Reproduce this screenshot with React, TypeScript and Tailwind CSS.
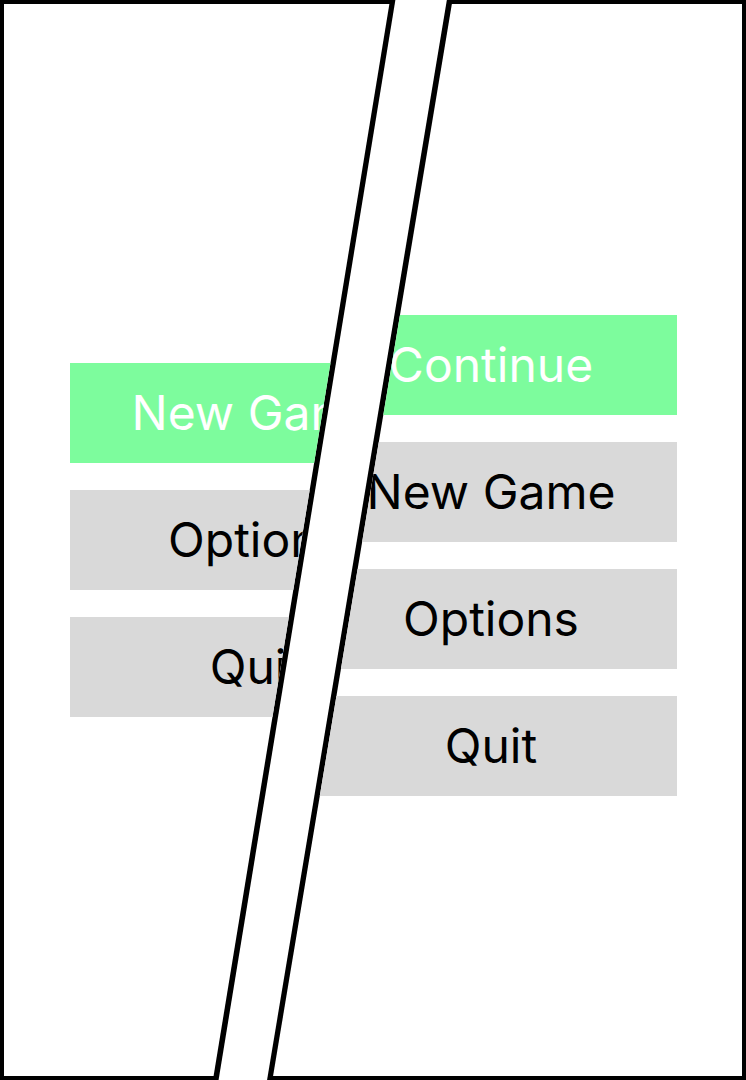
type MenuProps = { label: string; items: string[] };

function Menu({ label, items }: MenuProps) {
  return (
    <nav aria-label={label} className="flex w-[372px] flex-col gap-[27px]">
      {items.map((item, index) => (
        <button
          key={item}
          type="button"
          className={
            index === 0
              ? "flex h-[100px] items-center justify-center bg-[#7dfc9d] text-5xl whitespace-nowrap text-white"
              : "flex h-[100px] items-center justify-center bg-[#d9d9d9] text-5xl whitespace-nowrap text-black"
          }
        >
          {item}
        </button>
      ))}
    </nav>
  );
}

export default function App() {
  return (
    <main className="grid min-h-screen grid-cols-1 bg-white font-['Inter',sans-serif]">
      <section className="col-start-1 row-start-1 grid bg-black [clip-path:polygon(0_0,53%_0,29.3%_100%,0_100%)]">
        <div className="flex items-center bg-white pl-[70px] [clip-path:polygon(4px_4px,calc(53%_-_6px)_4px,calc(29.3%_-_5px)_calc(100%_-_4px),4px_calc(100%_-_4px))]">
          <Menu label="First launch menu" items={["New Game", "Options", "Quit"]} />
        </div>
      </section>
      <section className="col-start-1 row-start-1 grid bg-black [clip-path:polygon(59.9%_0,100%_0,100%_100%,35.8%_100%)]">
        <div className="flex items-center justify-end bg-white pt-[31px] pr-[69px] [clip-path:polygon(calc(59.9%_+_5px)_4px,calc(100%_-_4px)_4px,calc(100%_-_4px)_calc(100%_-_4px),calc(35.8%_+_6px)_calc(100%_-_4px))]">
          <Menu label="Saved game menu" items={["Continue", "New Game", "Options", "Quit"]} />
        </div>
      </section>
    </main>
  );
}
